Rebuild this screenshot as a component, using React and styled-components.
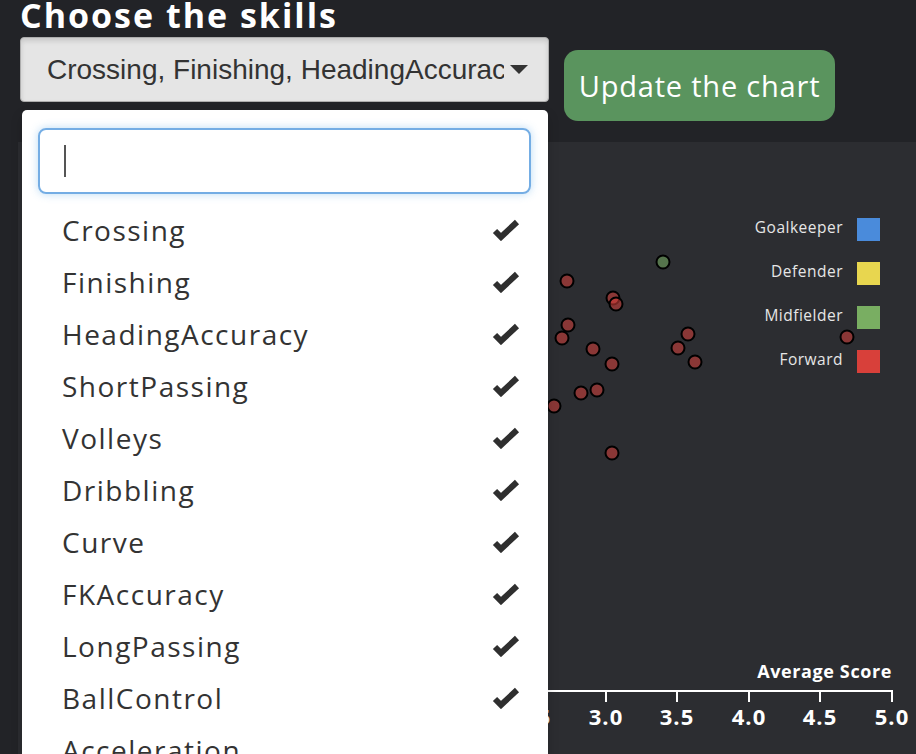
import React from 'react'
import styled, { createGlobalStyle } from 'styled-components'

const skills = [
    'Crossing', 'Finishing', 'HeadingAccuracy', 'ShortPassing', 'Volleys',
    'Dribbling', 'Curve', 'FKAccuracy', 'LongPassing', 'BallControl', 'Acceleration',
]

const legend = [
    { label: 'Goalkeeper', color: '#4a8bdb' },
    { label: 'Defender', color: '#e8d64f' },
    { label: 'Midfielder', color: '#79ae62' },
    { label: 'Forward', color: '#d8403a' },
]

// page coordinates of the dots
const dots = [
    [663, 262, '#79ae62'],
    [567, 281], [613, 298], [616, 304], [568, 325], [562, 338], [593, 349],
    [612, 364], [688, 334], [678, 348], [695, 362], [581, 393], [597, 390],
    [554, 406], [612, 453], [847, 337],
]

const ticks = [
    { v: '2.0', x: 462 }, { v: '2.5', x: 534 }, { v: '3.0', x: 606 },
    { v: '3.5', x: 677 }, { v: '4.0', x: 749 }, { v: '4.5', x: 820 }, { v: '5.0', x: 892 },
]

const GlobalStyle = createGlobalStyle`
    body {
        margin: 0;
        background: #222327;
        overflow: hidden;
        font-family: "Open Sans", "Liberation Sans", sans-serif;
    }
`

const Check = () => (
    <svg width="30" height="22" viewBox="0 0 30 22">
        <polyline points="4,12 10,18 26,3" fill="none" stroke="#2f2f2f" strokeWidth="6" strokeLinejoin="miter" />
    </svg>
)

const Chart = () => (
    <svg width="898" height="612" viewBox="18 142 898 612">
        {legend.map((l, i) => (
            <g key={l.label}>
                <text x="843" y={229 + i * 44} fill="#e6e6e6" fontSize="15.5" letterSpacing="0.5" textAnchor="end"
                    dominantBaseline="middle" fontFamily="'Open Sans', sans-serif">{l.label}</text>
                <rect x="857" y={218 + i * 44} width="23" height="23" fill={l.color} />
            </g>
        ))}
        {dots.map(([x, y, c], i) => (
            <circle key={i} cx={x} cy={y} r="6.5" fill={c || '#d8403a'} fillOpacity="0.55"
                stroke="#000" strokeWidth="2" />
        ))}
        <line x1="300" y1="691" x2="893" y2="691" stroke="#fff" strokeWidth="2" />
        {ticks.map(t => (
            <g key={t.v}>
                <line x1={t.x} y1="691" x2={t.x} y2="702" stroke="#fff" strokeWidth="2" />
                <text x={t.x} y="725" fill="#fff" fontSize="22" fontWeight="700" letterSpacing="1"
                    textAnchor="middle" fontFamily="'Open Sans', sans-serif">{t.v}</text>
            </g>
        ))}
        <text x="892" y="678" fill="#fff" fontSize="18" fontWeight="700" letterSpacing="0.6"
            textAnchor="end" fontFamily="'Open Sans', sans-serif">Average Score</text>
    </svg>
)

export default function App() {
    return (
        <Page>
            <GlobalStyle />
            <Header>
                <Title>Choose the skills</Title>
                <Controls>
                    <SelectWrap>
                        <SelectButton>
                            <SelectText>Crossing, Finishing, HeadingAccuracy, ShortPassing</SelectText>
                            <Caret />
                        </SelectButton>
                        <Menu>
                            <SearchBox><TextCursor /></SearchBox>
                            <List>
                                {skills.map(s => (
                                    <Item key={s}>
                                        <span>{s}</span>
                                        {s !== 'Acceleration' && <Check />}
                                    </Item>
                                ))}
                            </List>
                        </Menu>
                    </SelectWrap>
                    <UpdateButton>Update the chart</UpdateButton>
                </Controls>
            </Header>
            <Panel>
                <Chart />
            </Panel>
        </Page>
    )
}

const Page = styled.div`
    height: 754px;
    overflow: hidden;
`

const Header = styled.div`
    padding-left: 20px;
`

const Title = styled.h1`
    margin: 0;
    height: 37px;
    font-size: 34px;
    line-height: 30px;
    font-weight: 700;
    color: #fff;
    letter-spacing: 2px;
`

const Controls = styled.div`
    display: flex;
    align-items: flex-start;
    gap: 15px;
`

const SelectWrap = styled.div`
    position: relative;
    width: 529px;
`

const SelectButton = styled.div`
    display: flex;
    align-items: center;
    box-sizing: border-box;
    height: 65px;
    padding: 0 20px 0 26px;
    background: #e5e5e5;
    border: 1px solid #adadad;
    border-radius: 4px;
    box-shadow: inset 0 3px 5px rgba(0, 0, 0, 0.125);
    color: #333;
`

const SelectText = styled.span`
    flex: 1;
    overflow: hidden;
    white-space: nowrap;
    font-family: "Liberation Sans", Arial, sans-serif;
    font-size: 28px;
`

const Caret = styled.span`
    width: 0;
    height: 0;
    margin-left: 6px;
    border-left: 9px solid transparent;
    border-right: 9px solid transparent;
    border-top: 9px solid #333;
`

const Menu = styled.div`
    position: absolute;
    z-index: 10;
    top: 73px;
    left: 2px;
    width: 526px;
    height: 680px;
    box-sizing: border-box;
    padding: 18px 17px 0 16px;
    background: #fff;
    border-radius: 5px;
    box-shadow: 0 6px 12px rgba(0, 0, 0, 0.175);
`

const SearchBox = styled.div`
    box-sizing: border-box;
    height: 66px;
    padding: 0 0 0 24px;
    display: flex;
    align-items: center;
    border: 2px solid #74ade4;
    border-radius: 8px;
    box-shadow: 0 0 8px rgba(102, 175, 233, 0.45);
`

const TextCursor = styled.span`
    width: 2px;
    height: 32px;
    background: #555;
`

const List = styled.div`
    margin: 10px -17px 0 -16px;
`

const Item = styled.div`
    display: flex;
    align-items: center;
    justify-content: space-between;
    height: 52px;
    padding: 0 27px 0 40px;
    color: #333;
    font-size: 28px;
    letter-spacing: 1.5px;
`

const UpdateButton = styled.button`
    margin-top: 13px;
    width: 271px;
    height: 71px;
    border: none;
    border-radius: 14px;
    background: #5a945e;
    color: #fff;
    font-family: "Open Sans", sans-serif;
    font-size: 29px;
    letter-spacing: 0.8px;
`

const Panel = styled.div`
    margin: 21px 0 0 18px;
    height: 612px;
    background: #2c2d31;
    overflow: hidden;
`
